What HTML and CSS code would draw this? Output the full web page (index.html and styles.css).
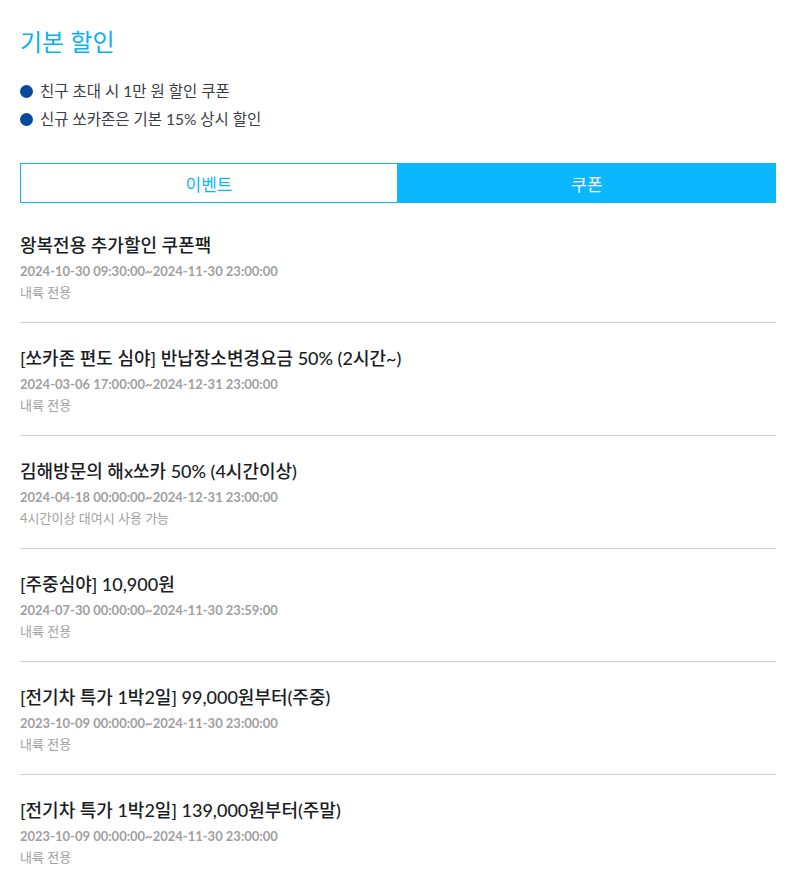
FILE: index.html
```html
<!DOCTYPE html>
<html lang="ko">
<head>
  <meta charset="UTF-8">
  <meta name="viewport" content="width=device-width, initial-scale=1.0">
  <title>기본 할인</title>
  <link rel="stylesheet" href="styles.css">
</head>
<body>
  <div class="discount-page">
    <h2 class="section-title">기본 할인</h2>

    <!-- 기본 할인 안내 -->
    <ul class="info-list">
      <li>친구 초대 시 1만 원 할인 쿠폰</li>
      <li>신규 쏘카존은 기본 15% 상시 할인</li>
    </ul>

    <!-- 탭 -->
    <div class="tabs">
      <button class="tab">이벤트</button>
      <button class="tab active">쿠폰</button>
    </div>

    <!-- 쿠폰 목록 -->
    <ul class="coupon-list">
      <li class="coupon">
        <div class="coupon-title">왕복전용 추가할인 쿠폰팩</div>
        <div class="coupon-date">2024-10-30 09:30:00~2024-11-30 23:00:00</div>
        <div class="coupon-desc">내륙 전용</div>
      </li>
      <li class="coupon">
        <div class="coupon-title">[쏘카존 편도 심야] 반납장소변경요금 50% (2시간~)</div>
        <div class="coupon-date">2024-03-06 17:00:00~2024-12-31 23:00:00</div>
        <div class="coupon-desc">내륙 전용</div>
      </li>
      <li class="coupon">
        <div class="coupon-title">김해방문의 해x쏘카 50% (4시간이상)</div>
        <div class="coupon-date">2024-04-18 00:00:00~2024-12-31 23:00:00</div>
        <div class="coupon-desc">4시간이상 대여시 사용 가능</div>
      </li>
      <li class="coupon">
        <div class="coupon-title">[주중심야] 10,900원</div>
        <div class="coupon-date">2024-07-30 00:00:00~2024-11-30 23:59:00</div>
        <div class="coupon-desc">내륙 전용</div>
      </li>
      <li class="coupon">
        <div class="coupon-title">[전기차 특가 1박2일] 99,000원부터(주중)</div>
        <div class="coupon-date">2023-10-09 00:00:00~2024-11-30 23:00:00</div>
        <div class="coupon-desc">내륙 전용</div>
      </li>
      <li class="coupon">
        <div class="coupon-title">[전기차 특가 1박2일] 139,000원부터(주말)</div>
        <div class="coupon-date">2023-10-09 00:00:00~2024-11-30 23:00:00</div>
        <div class="coupon-desc">내륙 전용</div>
      </li>
    </ul>
  </div>
</body>
</html>
```

FILE: styles.css
```css
/* Base */
body {
  margin: 0;
  padding: 0;
  background: #fff;
  font-family: "Lato", "Noto Sans CJK KR", sans-serif;
  color: #1b1d24;
}

.discount-page {
  padding: 26px 36px 0 20px;
}

.section-title {
  margin: 0;
  font-size: 24px;
  font-weight: 400;
  line-height: 32px;
  color: #0cb1f2;
}

/* Info bullets */
.info-list {
  list-style: none;
  margin: 19px 0 0;
  padding: 0;
}

.info-list li {
  display: flex;
  align-items: center;
  gap: 7px;
  font-size: 15.5px;
  line-height: 28px;
  color: #3a3d44;
}

.info-list li::before {
  content: "";
  width: 13px;
  height: 13px;
  border-radius: 50%;
  background: #0a4a9d;
  flex-shrink: 0;
}

/* Tabs */
.tabs {
  display: flex;
  margin-top: 30px;
}

.tab {
  flex: 1;
  height: 40px;
  border: 1px solid #0bb7ff;
  background: #fff;
  color: #0bb7ff;
  font-family: inherit;
  font-size: 17px;
  padding: 0;
  cursor: pointer;
}

.tab.active {
  background: #0bb7ff;
  color: #fff;
}

/* Coupon list */
.coupon-list {
  list-style: none;
  margin: 0;
  padding: 0;
}

.coupon {
  padding: 22px 0 19px;
  border-bottom: 1px solid #cfcfcf;
}

.coupon:first-child {
  padding-top: 29px;
}

.coupon:last-child {
  border-bottom: none;
}

.coupon-title {
  font-size: 18px;
  font-weight: 500;
  line-height: 26px;
  color: #1b1d24;
}

.coupon-date {
  margin-top: 3px;
  font-size: 13px;
  font-weight: 700;
  line-height: 20px;
  color: #a0a0a0;
}

.coupon-desc {
  font-size: 13px;
  line-height: 22px;
  color: #a0a0a0;
}
```
